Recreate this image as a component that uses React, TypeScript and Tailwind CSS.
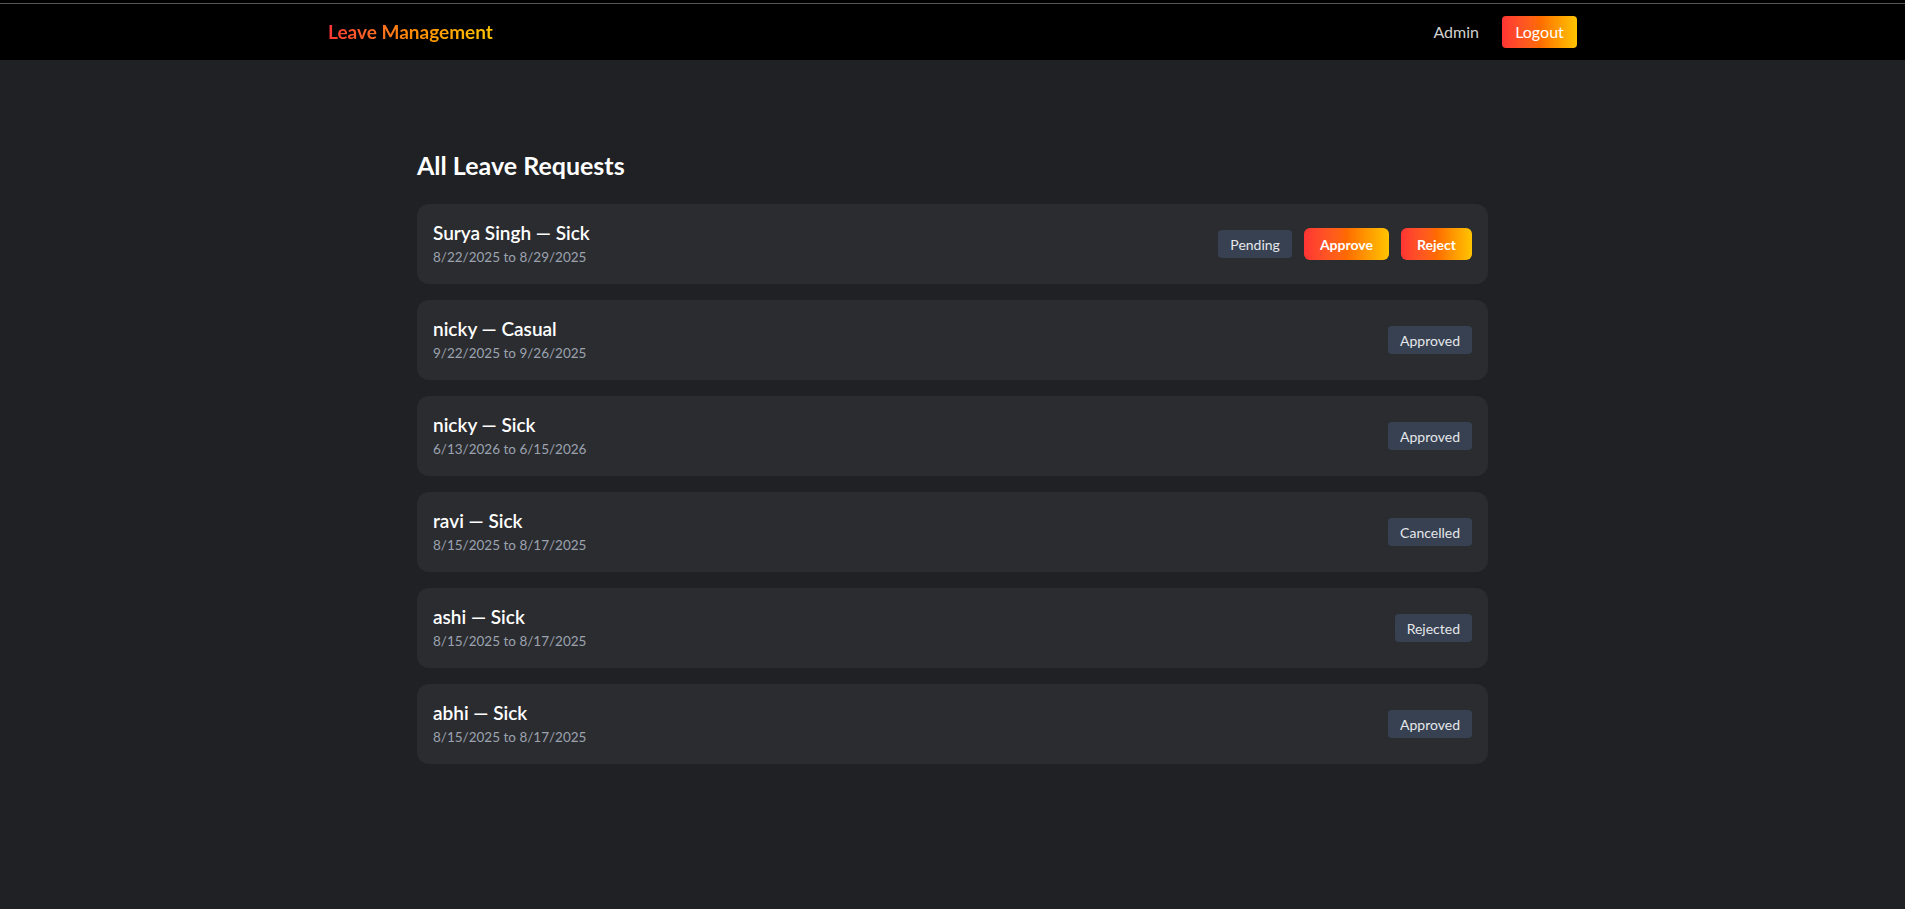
type Leave = {
  name: string;
  type: string;
  from: string;
  to: string;
  status: "Pending" | "Approved" | "Cancelled" | "Rejected";
};

const leaves: Leave[] = [
  { name: "Surya Singh", type: "Sick", from: "8/22/2025", to: "8/29/2025", status: "Pending" },
  { name: "nicky", type: "Casual", from: "9/22/2025", to: "9/26/2025", status: "Approved" },
  { name: "nicky", type: "Sick", from: "6/13/2026", to: "6/15/2026", status: "Approved" },
  { name: "ravi", type: "Sick", from: "8/15/2025", to: "8/17/2025", status: "Cancelled" },
  { name: "ashi", type: "Sick", from: "8/15/2025", to: "8/17/2025", status: "Rejected" },
  { name: "abhi", type: "Sick", from: "8/15/2025", to: "8/17/2025", status: "Approved" },
];

const gradient = "bg-gradient-to-r from-[#ff3333] via-[#ff6a00] to-[#ffc400]";

function LeaveCard({ leave }: { leave: Leave }) {
  return (
    <div className="h-[80px] rounded-xl bg-[#2b2c30] px-4 flex items-center justify-between">
      <div className="flex flex-col">
        <span className="text-[19px] leading-[26px] font-semibold text-white">
          {leave.name} — {leave.type}
        </span>
        <span className="text-[13.5px] leading-[22px] text-[#9ca3af]">
          {leave.from} to {leave.to}
        </span>
      </div>
      <div className="flex items-center gap-3">
        <span className="h-[28px] px-3 rounded bg-[#374151] text-[14px] text-[#e5e7eb] flex items-center">
          {leave.status}
        </span>
        {leave.status === "Pending" && (
          <>
            <button className={`h-[32px] px-4 rounded-md ${gradient} text-[14px] font-bold text-white`}>
              Approve
            </button>
            <button className={`h-[32px] px-4 rounded-md ${gradient} text-[14px] font-bold text-white`}>
              Reject
            </button>
          </>
        )}
      </div>
    </div>
  );
}

export default function App() {
  return (
    <div className="min-h-[909px] flex bg-[#202124] font-['Lato','Open_Sans',sans-serif]">
      <div className="flex-1 flex flex-col">
        {/* Navbar */}
        <div className="bg-black pt-[3px]">
          <div className="h-px bg-[#555555]" />
          <nav className="h-[56px] w-[1249px] mx-auto flex items-center justify-between">
            <span className="text-[19px] font-bold bg-gradient-to-r from-[#ff3333] via-[#ff8a00] to-[#ffc400] bg-clip-text text-transparent">
              Leave Management
            </span>
            <div className="flex items-center gap-[23px]">
              <span className="text-[16px] text-[#d0d0d0]">Admin</span>
              <button className={`h-[32px] w-[75px] rounded ${gradient} text-[16px] text-white`}>
                Logout
              </button>
            </div>
          </nav>
        </div>

        {/* Main */}
        <main className="w-[1071px] mx-auto pt-[89px] pb-16">
          <h1 className="text-[25px] leading-[32px] font-bold text-white mb-[23px]">All Leave Requests</h1>
          <div className="flex flex-col gap-4">
            {leaves.map((l, i) => (
              <LeaveCard key={i} leave={l} />
            ))}
          </div>
        </main>
      </div>
      <div className="w-[2px] bg-white" />
    </div>
  );
}
